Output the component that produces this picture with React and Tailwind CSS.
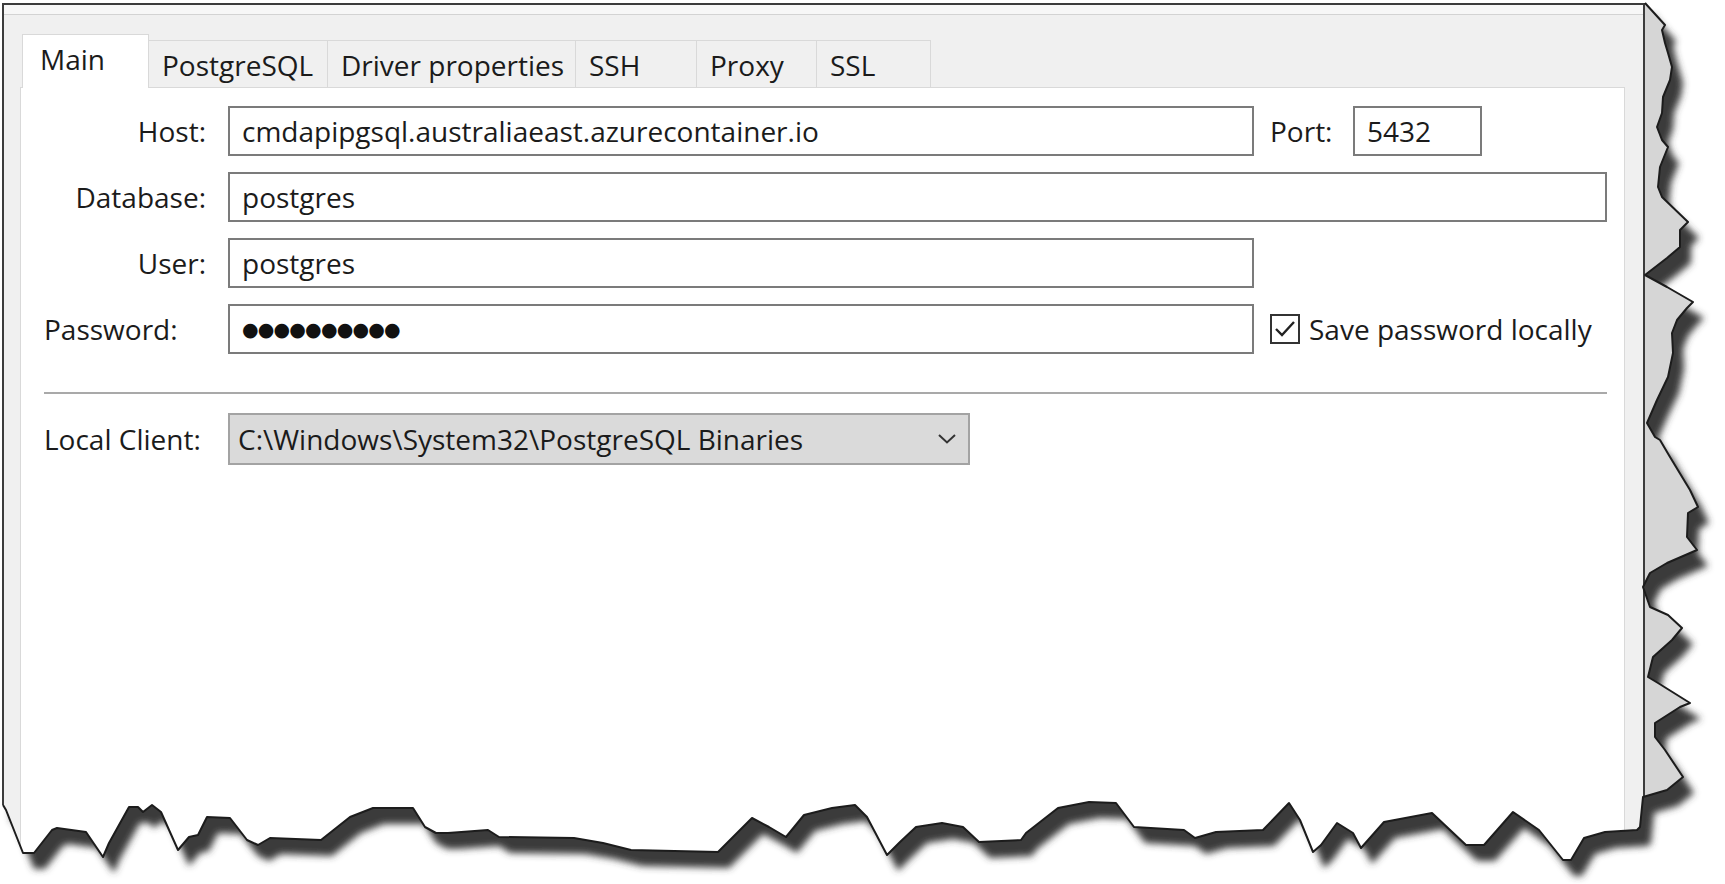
import React from "react";

/* torn paper edge, traced from the screenshot (right side, then bottom) */
const EDGE = [
  [1645, 3], [1665, 25], [1662, 30], [1665, 43], [1668, 53], [1672, 67], [1670, 80],
  [1663, 97], [1662, 113], [1657, 127], [1662, 140], [1668, 147], [1660, 167],
  [1658, 187], [1662, 197], [1688, 222], [1680, 230], [1680, 247], [1667, 258],
  [1645, 275], [1667, 287], [1693, 302], [1687, 308], [1677, 320], [1672, 333],
  [1673, 353], [1668, 377], [1657, 400], [1647, 423], [1655, 437], [1660, 440],
  [1670, 457], [1690, 490], [1698, 507], [1688, 513], [1687, 537], [1697, 550],
  [1667, 563], [1650, 573], [1643, 587], [1650, 607], [1668, 615], [1682, 628],
  [1672, 640], [1653, 657], [1648, 677], [1658, 683], [1690, 703], [1680, 707],
  [1655, 723], [1655, 737], [1665, 750], [1683, 777], [1667, 790], [1643, 797],
  [1640, 827], [1637, 830], [1605, 832], [1584, 838], [1571, 860], [1563, 860],
  [1539, 830], [1513, 812], [1484, 845], [1466, 845], [1432, 813], [1384, 822],
  [1361, 848], [1353, 833], [1337, 823], [1321, 845], [1313, 852], [1300, 820],
  [1289, 803], [1263, 830], [1216, 832], [1195, 838], [1184, 830], [1134, 827],
  [1116, 803], [1089, 802], [1058, 808], [1026, 833], [1021, 840], [979, 842],
  [963, 827], [942, 823], [916, 827], [900, 842], [887, 855], [867, 817],
  [855, 805], [832, 808], [804, 815], [786, 837], [769, 827], [752, 818],
  [718, 852], [631, 850], [603, 843], [574, 838], [499, 837], [488, 830],
  [448, 833], [436, 833], [425, 827], [413, 808], [373, 808], [350, 817],
  [321, 840], [270, 838], [258, 845], [247, 840], [230, 818], [207, 817],
  [198, 835], [189, 837], [178, 850], [161, 812], [152, 805], [143, 812],
  [138, 807], [129, 807], [109, 843], [103, 857], [86, 832], [57, 828],
  [52, 830], [34, 853], [23, 853], [6, 810], [3, 805],
];
const PAPER = [[0, 0], [1645, 0], ...EDGE, [0, 805]];
const toPath = (pts, close) =>
  "M" + pts.map(p => p.join(",")).join(" L") + (close ? " Z" : "");

const TABS = [
  { label: "Main", w: 127 },
  { label: "PostgreSQL", w: 180 },
  { label: "Driver properties", w: 249 },
  { label: "SSH", w: 122 },
  { label: "Proxy", w: 121 },
  { label: "SSL", w: 115 },
];

const MASKED = "●".repeat(10);

function Field({ w, children }) {
  return (
    <div
      className="h-[50px] bg-white border-2 border-[#7b7b7b] flex items-center px-[12px] text-[#1b1b1b]"
      style={{ width: w }}
    >
      {children}
    </div>
  );
}

function Label({ children, left }) {
  return (
    <div className={`w-[207px] shrink-0 ${left ? "pl-[23px] text-left" : "pr-[22px] text-right"}`}>
      {children}
    </div>
  );
}

function TornEdge() {
  const paper = toPath(PAPER, true);
  return (
    <svg className="absolute inset-0 pointer-events-none" width="1725" height="884" viewBox="0 0 1725 884">
      <defs>
        <filter id="soft" x="-5%" y="-5%" width="110%" height="110%">
          <feGaussianBlur stdDeviation="3.5" />
        </filter>
        <mask id="outside">
          <rect width="1725" height="884" fill="white" />
          <path d={paper} fill="black" />
        </mask>
      </defs>
      <g mask="url(#outside)">
        <rect width="1725" height="884" fill="white" />
        <path d={paper} transform="translate(11,16)" fill="#3a3a3a" filter="url(#soft)" />
      </g>
      <path d={toPath(EDGE, false)} fill="none" stroke="#1c1c1c" strokeWidth="2" strokeLinejoin="round" />
    </svg>
  );
}

export default function App() {
  return (
    <div className="relative w-[1725px] h-[884px] overflow-hidden bg-white flex font-['Open_Sans',sans-serif] text-[28px] text-[#1b1b1b]">

      {/* ── dialog window ── */}
      <div className="ml-[2px] mt-[3px] w-[1643px] shrink-0 border-l-2 border-t-2 border-r-2 border-[#3c3c3c] flex flex-col">
        <div className="h-[10px] bg-[#f7f7f7] border-b border-[#d3d3d3]" />

        <div className="flex-1 bg-[#f0f0f0] pl-[16px] pr-[18px] pt-[19px] flex flex-col">
          {/* tabs */}
          <div className="flex items-end">
            {TABS.map((t, i) =>
              i === 0 ? (
                <div
                  key={t.label}
                  className="relative z-10 ml-[2px] -mb-px h-[54px] bg-white border border-b-0 border-[#d9d9d9] flex items-center pl-[17px] pb-[5px]"
                  style={{ width: t.w }}
                >
                  {t.label}
                </div>
              ) : (
                <div
                  key={t.label}
                  className="h-[47px] bg-[#f0f0f0] border border-b-0 border-[#d9d9d9] -ml-px flex items-center pl-[13px] pt-[1px]"
                  style={{ width: t.w }}
                >
                  {t.label}
                </div>
              )
            )}
          </div>

          {/* panel */}
          <div className="flex-1 bg-white border border-[#d9d9d9] pt-[18px] flex flex-col">
            <div className="flex flex-col gap-[16px]">
              <div className="flex items-center">
                <Label>Host:</Label>
                <Field w={1026}>cmdapipgsql.australiaeast.azurecontainer.io</Field>
                <div className="ml-[16px] w-[83px]">Port:</div>
                <Field w={129}>5432</Field>
              </div>
              <div className="flex items-center">
                <Label>Database:</Label>
                <Field w={1379}>postgres</Field>
              </div>
              <div className="flex items-center">
                <Label>User:</Label>
                <Field w={1026}>postgres</Field>
              </div>
              <div className="flex items-center">
                <Label left>Password:</Label>
                <Field w={1026}>
                  <span className="font-['DejaVu_Sans',sans-serif] text-[19px] tracking-[-0.8px] text-[#111]">{MASKED}</span>
                </Field>
                <div className="ml-[16px] w-[30px] h-[30px] border-2 border-[#333] flex items-center justify-center">
                  <svg width="22" height="20" viewBox="0 0 22 20">
                    <polyline points="2,10 8,16 20,3" fill="none" stroke="#222" strokeWidth="2.4" />
                  </svg>
                </div>
                <div className="ml-[9px]">Save password locally</div>
              </div>
            </div>

            <div className="ml-[23px] mt-[38px] w-[1563px] h-[2px] bg-[#a9a9a9]" />

            <div className="flex items-center mt-[19px]">
              <Label left>Local Client:</Label>
              <div className="w-[742px] h-[52px] bg-[#dadada] border-2 border-[#a3a3a3] flex items-center pl-[8px] pr-[12px]">
                <span className="flex-1">C:\Windows\System32\PostgreSQL Binaries</span>
                <svg width="18" height="10" viewBox="0 0 18 10">
                  <polyline points="1,1 9,8.5 17,1" fill="none" stroke="#333" strokeWidth="2" />
                </svg>
              </div>
            </div>
          </div>
        </div>
      </div>

      {/* strip of the window behind, right of the dialog */}
      <div className="flex-1 mt-[3px] bg-[#d6d6d6]" />

      <TornEdge />
    </div>
  );
}
